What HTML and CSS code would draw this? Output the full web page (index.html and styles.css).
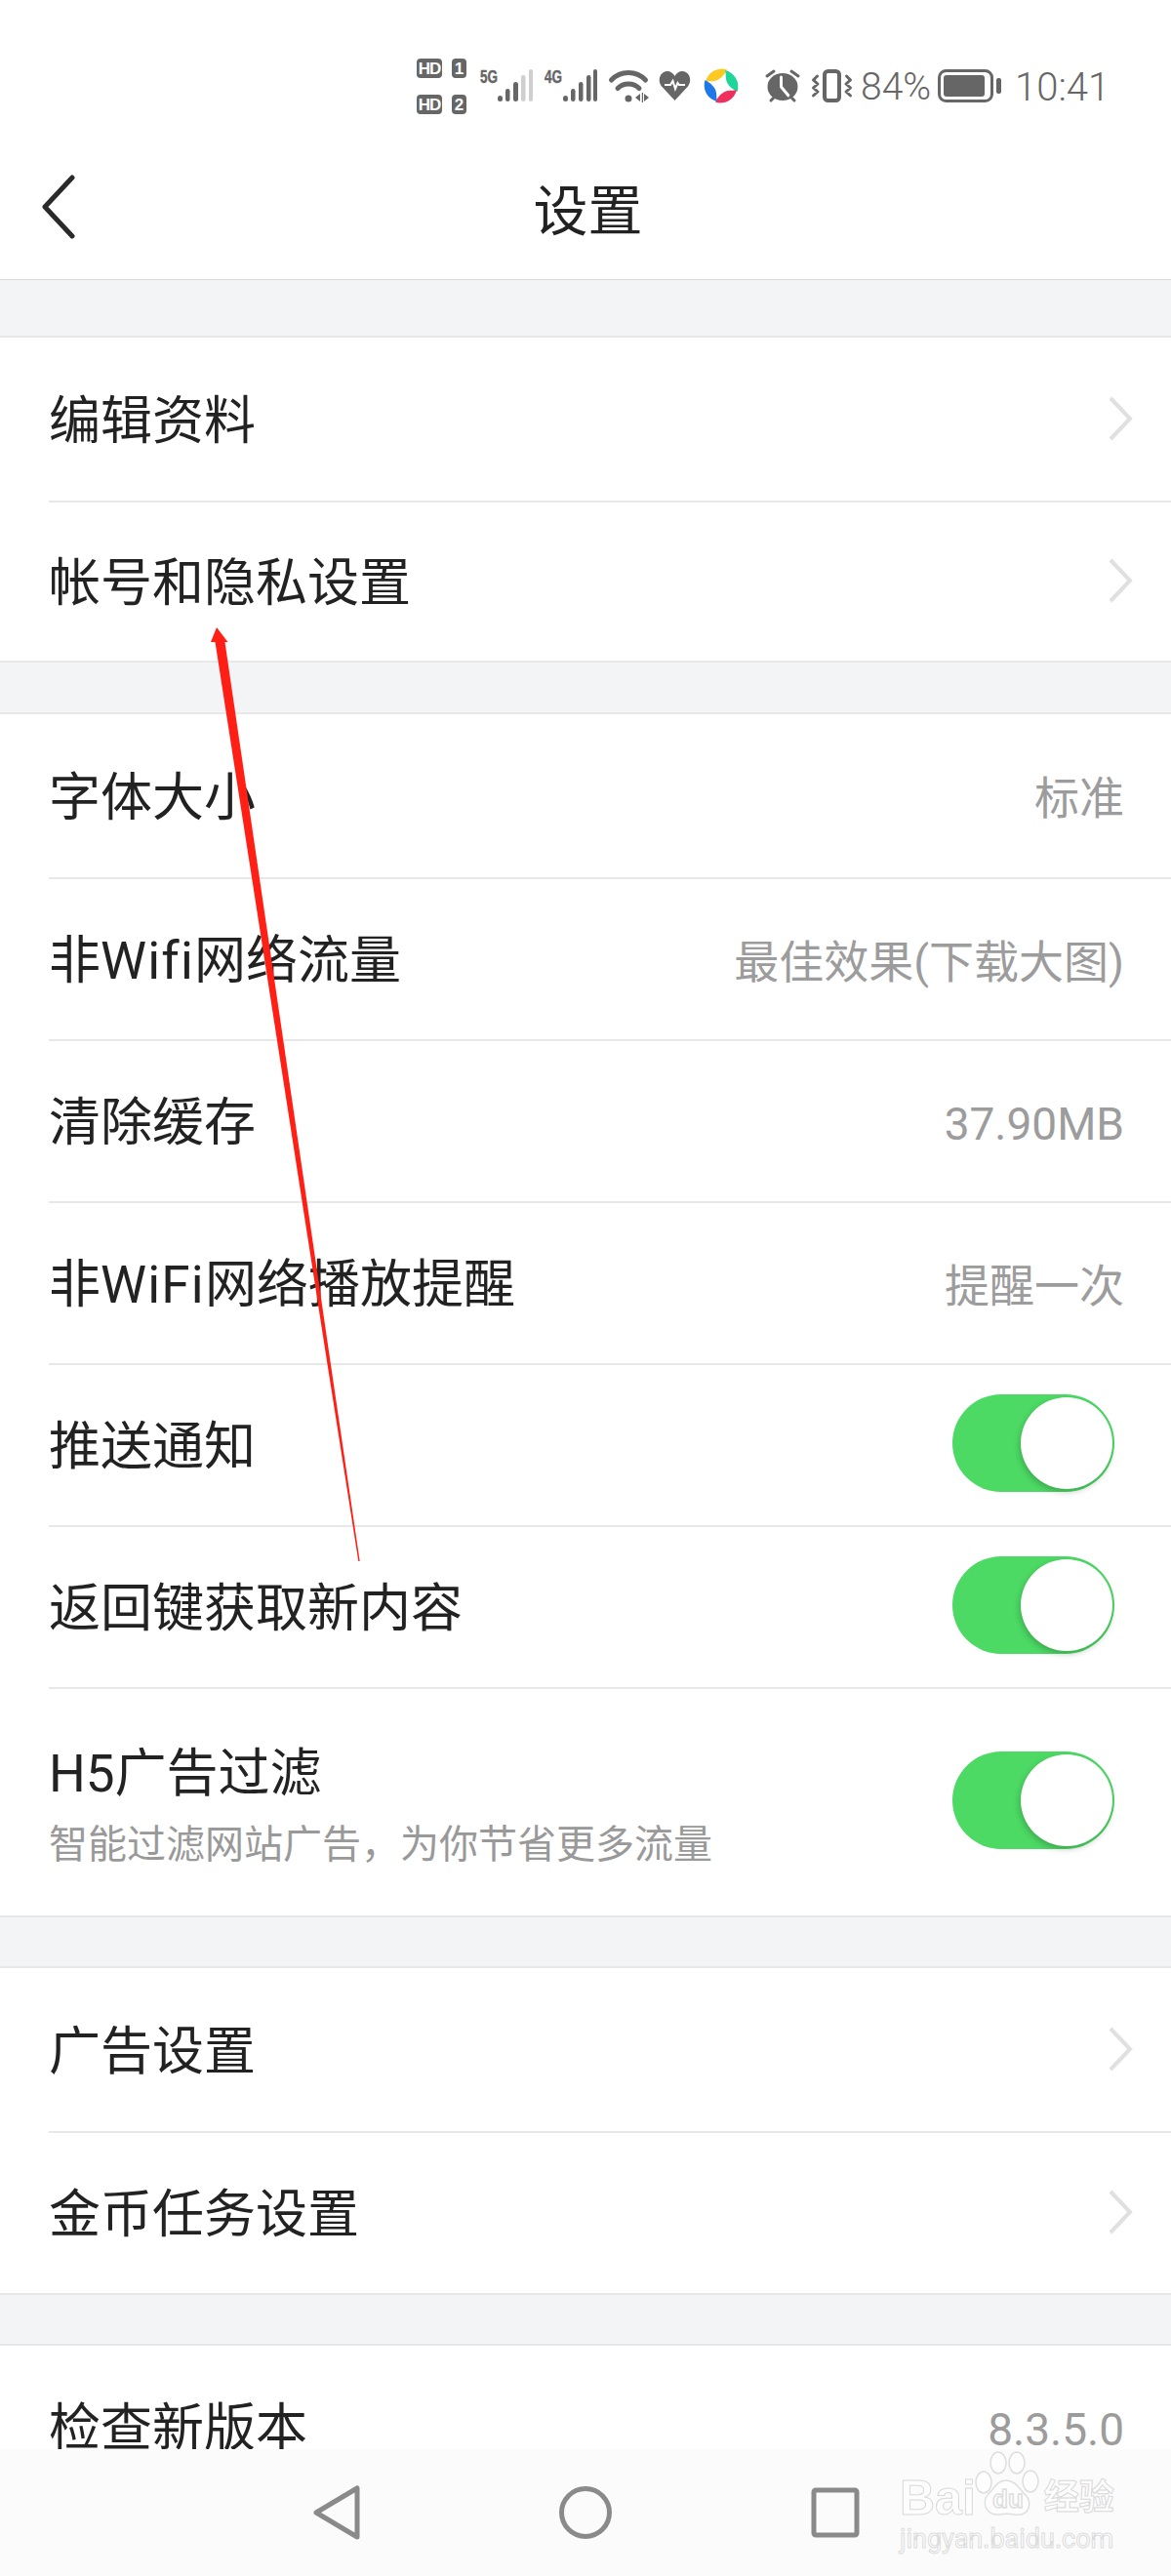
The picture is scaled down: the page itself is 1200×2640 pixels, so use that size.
FILE: index.html
```html
<!DOCTYPE html>
<html lang="zh-CN">
<head>
<meta charset="utf-8">
<title>设置</title>
<link rel="stylesheet" href="styles.css">
</head>
<body>
<div class="phone">
  <div class="content">
    <header class="head">
      <div class="status">
        <div class="sims">
          <span class="hd">HD</span><span class="sim">1</span>
          <span class="hd">HD</span><span class="sim">2</span>
        </div>
        <svg class="ic sig1" width="54" height="34" viewBox="0 0 54 34">
          <text class="net" x="0" y="14" textLength="18" lengthAdjust="spacingAndGlyphs">5G</text>
          <g class="bars">
            <rect x="18" y="27" width="5" height="6" rx="2.5"/><rect x="26" y="20" width="4.500" height="13" rx="2.200"/><rect x="34" y="13" width="5" height="20" rx="2.500"/>
            <rect class="off" x="42" y="6" width="4.500" height="27" rx="2.200"/><rect class="off" x="50" y="0" width="4" height="33" rx="2"/>
          </g>
        </svg>
        <svg class="ic sig2" width="54" height="34" viewBox="0 0 54 34">
          <text class="net" x="0" y="14" textLength="18" lengthAdjust="spacingAndGlyphs">4G</text>
          <g class="bars">
            <rect x="19" y="27" width="5" height="6" rx="2.500"/><rect x="27" y="20" width="4.500" height="13" rx="2.200"/><rect x="35" y="13" width="4.500" height="20" rx="2.200"/>
            <rect x="43" y="6" width="4.500" height="27" rx="2.200"/><rect x="50" y="0" width="4" height="33" rx="2"/>
          </g>
        </svg>
        <svg class="ic wifi" width="41" height="34" viewBox="0 0 41 34">
          <path class="ln5" d="M2.500 11C12 1 28 1 37.500 11"/>
          <path class="ln5" d="M9 19.500C15 13.500 25 13.500 31 19.500"/>
          <circle class="fg" cx="20" cy="30" r="3.500"/>
          <path class="fg" d="M32 25v8l-5-4zM36 25l5 4-5 4zM33.800 24h1.200v10h-1.200z"/>
        </svg>
        <svg class="ic heart" width="33" height="34" viewBox="0 0 33 34">
          <path class="fg" d="M16.500 32L3 17.500C-2 10.500 2 2 9 2C12 2 15 4 16.500 7C18 4 21 2 24 2C31 2 35 10.500 30 17.500Z"/>
          <path class="ecg" d="M6 16H12L14.500 12L17 20L19.500 14L21 16H27"/>
        </svg>
        <svg class="ic orb" width="36" height="36" viewBox="0 0 36 36">
          <path class="pet" fill="#fdc921" d="M2 14A17 17 0 0 1 24 1.500C21 7 17 12 11 13C8 13.500 5 13 2 14Z"/>
          <path class="pet" fill="#1fd69a" transform="rotate(90 18 18)" d="M2 14A17 17 0 0 1 24 1.500C21 7 17 12 11 13C8 13.500 5 13 2 14Z"/>
          <path class="pet" fill="#f0305c" transform="rotate(180 18 18)" d="M2 14A17 17 0 0 1 24 1.500C21 7 17 12 11 13C8 13.500 5 13 2 14Z"/>
          <path class="pet" fill="#1f78e8" transform="rotate(270 18 18)" d="M2 14A17 17 0 0 1 24 1.500C21 7 17 12 11 13C8 13.500 5 13 2 14Z"/>
        </svg>
        <svg class="ic alarm" width="36" height="34" viewBox="0 0 36 34">
          <ellipse class="fg" cx="18" cy="18" rx="15.500" ry="14"/>
          <path class="hand" d="M16.500 8V18L24 27"/>
          <path class="ln3" d="M2 7L9 2M34 7L27 2M6 32L10 28M30 32L26 28"/>
        </svg>
        <svg class="ic vib" width="41" height="34" viewBox="0 0 41 34">
          <rect class="ln4" x="13" y="2" width="15" height="30" rx="3.500"/>
          <path class="ln3" d="M5.500 7L1.500 11L6 15L1.500 19L6 23L1.500 27M35.500 7L39.500 11L35 15L39.500 19L35 23L39.500 27"/>
        </svg>
        <span class="pct">84%</span>
        <svg class="ic batt" width="65" height="34" viewBox="0 0 65 34">
          <rect class="ln3" x="1.500" y="1.500" width="54" height="31" rx="7"/>
          <rect class="fg" x="6" y="6" width="42" height="22" rx="3"/>
          <rect class="fg" x="60" y="9" width="5" height="16" rx="2"/>
        </svg>
        <span class="clock">10:41</span>
      </div>
      <div class="bar">
        <svg class="back" width="36" height="66" viewBox="0 0 36 66">
          <path d="M32 3L4 33L32 63"/>
        </svg>
        <h1 class="title">设置</h1>
      </div>
    </header>

    <section class="group g1">
      <div class="row tall"><span class="label">编辑资料</span><svg class="chev" width="25" height="46" viewBox="0 0 25 46"><path d="M2 2L22 23L2 44"/></svg></div>
      <div class="row short"><span class="label">帐号和隐私设置</span><svg class="chev" width="25" height="46" viewBox="0 0 25 46"><path d="M2 2L22 23L2 44"/></svg></div>
    </section>

    <section class="group g2">
      <div class="row tall"><span class="label">字体大小</span><span class="value">标准</span></div>
      <div class="row"><span class="label">非<span class="lat">Wifi</span>网络流量</span><span class="value">最佳效果(下载大图)</span></div>
      <div class="row"><span class="label">清除缓存</span><span class="value">37.90MB</span></div>
      <div class="row"><span class="label">非<span class="lat">WiFi</span>网络播放提醒</span><span class="value">提醒一次</span></div>
      <div class="row"><span class="label">推送通知</span><span class="toggle"><span class="knob"></span></span></div>
      <div class="row"><span class="label">返回键获取新内容</span><span class="toggle"><span class="knob"></span></span></div>
      <div class="row two">
        <div class="stack"><span class="label">H5广告过滤</span><span class="sub">智能过滤网站广告，为你节省更多流量</span></div>
        <span class="toggle"><span class="knob"></span></span>
      </div>
    </section>

    <section class="group g3">
      <div class="row tall"><span class="label">广告设置</span><svg class="chev" width="25" height="46" viewBox="0 0 25 46"><path d="M2 2L22 23L2 44"/></svg></div>
      <div class="row lastshort"><span class="label">金币任务设置</span><svg class="chev" width="25" height="46" viewBox="0 0 25 46"><path d="M2 2L22 23L2 44"/></svg></div>
    </section>

    <section class="group g4">
      <div class="row"><span class="label">检查新版本</span><span class="value">8.3.5.0</span></div>
    </section>
  </div>

  <nav class="nav">
    <svg class="nb" width="48" height="56" viewBox="0 0 48 56"><path d="M3 28L45 3V53Z"/></svg>
    <svg class="nb" width="54" height="56" viewBox="0 0 54 56"><circle cx="27" cy="28" r="24.500"/></svg>
    <svg class="nb" width="50" height="52" viewBox="0 0 50 52"><rect x="3" y="3" width="44" height="46" rx="2"/></svg>
  </nav>

  <svg class="arrow" width="1200" height="2640" viewBox="0 0 1200 2640">
    <path d="M222 643L233.500 658H230.500L339.200 1400L368.700 1600H367.300L335.800 1400L220.500 658H216Z"/>
  </svg>

  <div class="mark">
    <div class="brand">
      <span class="bai">Bai</span>
      <svg class="paw" width="74" height="68" viewBox="0 0 74 68">
        <ellipse cx="14" cy="32" rx="8" ry="11"/>
        <ellipse cx="29" cy="12" rx="8" ry="11"/>
        <ellipse cx="48" cy="12" rx="8" ry="11"/>
        <ellipse cx="62" cy="31" rx="8" ry="11"/>
        <path d="M37 30C28 30 25 38 19 44C12 51 15 66 30 65C36 64 40 64 46 65C62 67 64 52 56 44C50 38 46 30 37 30Z"/>
        <text class="du" x="23" y="58">du</text>
      </svg>
      <span class="jy">经验</span>
    </div>
    <div class="url">jingyan.baidu.com</div>
  </div>
</div>
</body>
</html>
```

FILE: styles.css
```css
* { box-sizing: border-box; }
html, body { margin: 0; padding: 0; }
body { background: #fff; font-family: Roboto, "Noto Sans CJK SC", sans-serif; color: #222; }

.phone { position: relative; width: 1200px; height: 2640px; overflow: hidden; display: flex; flex-direction: column; background: #f3f4f6; }
.content { flex: 1; min-height: 0; overflow: hidden; }

.head { background: #fff; border-bottom: 1px solid #dadada; height: 287px; }
.status { height: 146px; padding: 30px 0 0 427px; display: flex; align-items: center; color: #666; }
.ic { flex: none; display: block; overflow: visible; }
.sims { width: 51px; display: grid; grid-template-columns: 26px 15px; column-gap: 10px; row-gap: 17px; }
.hd, .sim { height: 20px; border-radius: 4px; background: #666; color: #fff; font: bold 17px/21px "Liberation Sans", sans-serif; text-align: center; }
.hd { letter-spacing: -1px; }
.sig1 { margin-left: 14px; }
.sig2 { margin-left: 12px; }
.wifi { margin-left: 12px; }
.heart { margin-left: 10px; }
.orb { margin-left: 13px; }
.alarm { margin-left: 27px; }
.vib { margin-left: 12px; }
.batt { margin-left: 7px; }
.net { font: bold 18px "Liberation Sans", sans-serif; fill: #666; stroke: #666; stroke-width: .4; }
.bars rect { fill: #666; }
.bars .off { fill: #cfcfcf; }
.fg { fill: #666; }
.ln3, .ln4, .ln5, .hand { fill: none; stroke: #666; stroke-linecap: round; stroke-linejoin: round; }
.ln3 { stroke-width: 3; }
.ln4 { stroke-width: 4; }
.ln5 { stroke-width: 5; }
.hand { stroke: #fff; stroke-width: 3; }
.ecg { fill: none; stroke: #fff; stroke-width: 2; }
.pct { margin-left: 9px; padding-top: 3px; font-size: 39px; font-weight: 300; line-height: 1; width: 72px; white-space: nowrap; }
.clock { margin-left: 14px; padding-top: 3px; font-size: 40px; font-weight: 300; line-height: 1; white-space: nowrap; }

.bar { height: 140px; display: flex; align-items: center; justify-content: center; position: relative; }
.back { position: absolute; left: 42px; top: 33px; fill: none; stroke: #2a2a2a; stroke-width: 5; stroke-linecap: round; stroke-linejoin: round; }
.title { margin: 0; padding: 2px 0 0 5px; font-size: 56px; font-weight: 400; line-height: 1; }

.group { background: #fff; border-top: 2px solid #e8e8e8; border-bottom: 2px solid #e8e8e8; }
.g1 { margin-top: 57px; }
.g2 { margin-top: 51px; }
.g3 { margin-top: 50px; }
.g4 { margin-top: 50px; }

.row { height: 166px; margin-left: 50px; padding-top: 5px; display: flex; align-items: center; justify-content: space-between; border-bottom: 2px solid #e8e8e8; }
.row:last-child { border-bottom: 0; }
.row.tall { height: 169px; }
.row.short { height: 162px; }
.row.lastshort { height: 164px; }
.row.two { height: 232px; }
.label { font-size: 53px; line-height: 1; white-space: nowrap; }
.lat { letter-spacing: 1.200px; }
.value { margin-right: 48px; font-size: 46px; line-height: 40px; color: #9c9c9c; white-space: nowrap; }
.chev { margin: -7px 39px 0 0; fill: none; stroke: #e0e0e0; stroke-width: 4; }
.stack { display: flex; flex-direction: column; padding-top: 4px; }
.stack .label { line-height: 60px; }
.sub { margin-top: 18px; font-size: 40px; line-height: 50px; color: #999; white-space: nowrap; }

.toggle { flex: none; position: relative; width: 166px; height: 100px; margin: -9px 58px 0 0; border-radius: 50px; background: #4cd964; }
.knob { position: absolute; top: 3px; right: 2px; width: 94px; height: 94px; border-radius: 50%; background: #fff; box-shadow: -1px 3px 6px rgba(0, 0, 0, .22); }

.nav { flex: none; height: 130px; background: #fbfbfb; display: flex; align-items: center; padding-left: 321px; gap: 204px; }
.nb { flex: none; fill: none; stroke: #8a8a8a; stroke-width: 5; stroke-linejoin: round; }

.arrow { position: absolute; left: 0; top: 0; pointer-events: none; }
.arrow path { fill: #ff1f14; }

.mark { position: absolute; left: 922px; top: 2512px; width: 216px; }
.brand { display: flex; align-items: flex-end; height: 68px; }
.bai, .jy { line-height: 40px; height: 40px; color: #fdfdfd; -webkit-text-stroke: 1px #d9d9d9; white-space: nowrap; }
.bai { font: bold 50px/40px "Liberation Sans", sans-serif; }
.jy { font-size: 36px; font-weight: 700; margin-left: 2px; }
.paw { flex: none; margin-left: -6px; fill: #fdfdfd; stroke: #dedede; stroke-width: 1.500; }
.du { font: bold 26px "Liberation Sans", sans-serif; }
.url { margin-top: 9px; font-size: 27px; line-height: 26px; color: #fdfdfd; -webkit-text-stroke: 1px #dcdcdc; white-space: nowrap; }
```
